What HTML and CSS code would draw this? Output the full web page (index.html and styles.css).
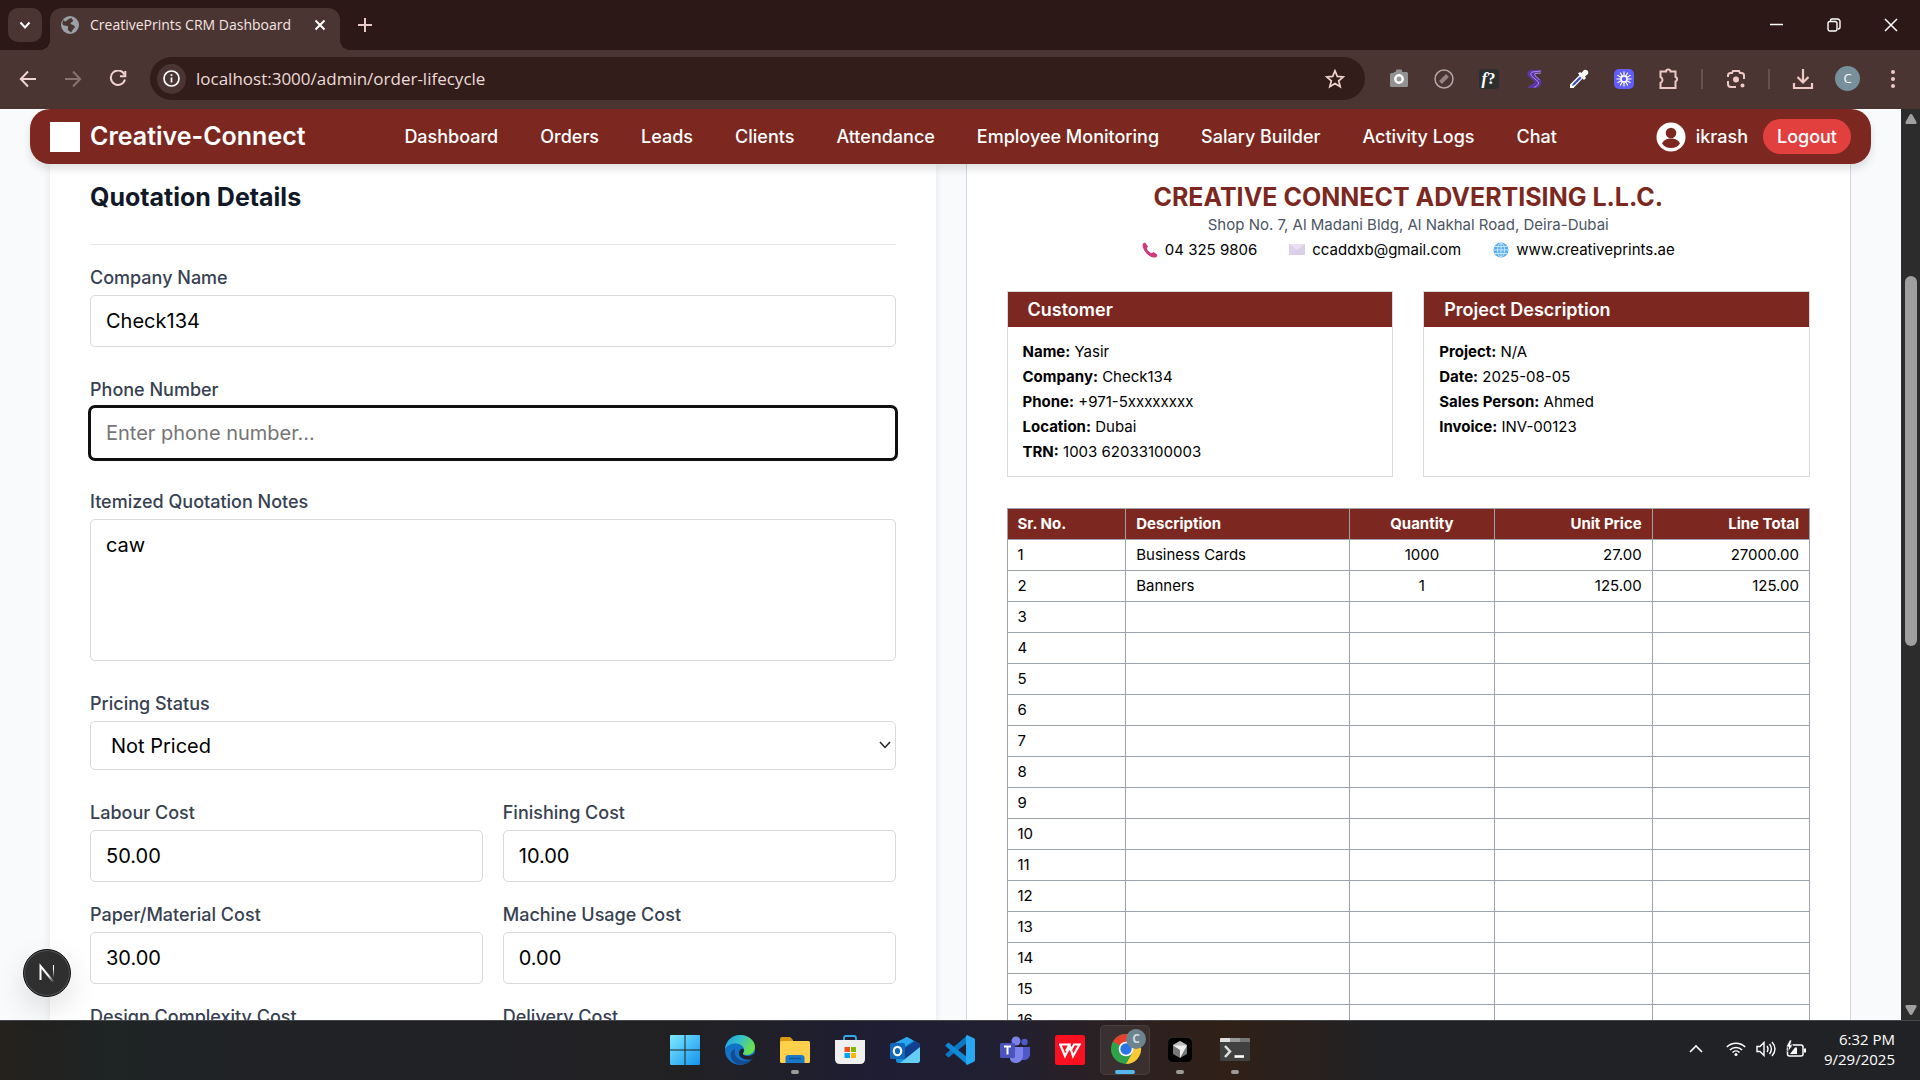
FILE: index.html
```html
<!DOCTYPE html>
<html lang="en">
<head>
<meta charset="utf-8">
<title>CreativePrints CRM Dashboard</title>
<link rel="stylesheet" href="styles.css">
</head>
<body>
<div class="tabstrip">
  <button class="tab-search" aria-label="Search tabs"><svg width="14" height="14" viewBox="0 0 14 14" fill="none" stroke="#fff" stroke-width="2"><path d="M2.500 4.500 7 9.500l4.500-5"/></svg></button>
  <div class="tab">
    <svg class="favicon" width="18" height="18" viewBox="0 0 18 18"><circle cx="9" cy="9" r="9" fill="#9aa0a6"/><path d="M3 3.500C1 6 1.200 8 2 9c1.500 1 4 .3 5 1.500.8 1-.8 2 0 3.500.5 1 2 1 2.200 2.500 2-.2 1.800-2.300 2.800-3.300 1.200-1 2.500-1.700 1.500-3.200C12.500 8.500 10 9 9.500 7.500 9.300 6 12 6.500 12 4.500c0-1-1.500-1.200-1.500-2.500-1.500-.5-2 1-3.500 1.500S5.500 6 4 5.500 3.500 4.500 3 3.500z" fill="#4a3533"/></svg>
    <span class="tab-title">CreativePrints CRM Dashboard</span>
    <button class="tab-close" aria-label="Close tab"><svg width="12" height="12" viewBox="0 0 12 12" fill="none" stroke="#fff" stroke-width="2"><path d="m1.500 1.500 9 9m0-9-9 9"/></svg></button>
  </div>
  <button class="new-tab" aria-label="New tab"><svg width="14" height="14" viewBox="0 0 14 14" fill="none" stroke="#e8c9c5" stroke-width="2"><path d="M7 0v14M0 7h14"/></svg></button>
  <div class="window-buttons">
    <button aria-label="Minimize"><svg width="14" height="14" viewBox="0 0 14 14" stroke="#fff" stroke-width="1.500"><path d="M0 6.500h13"/></svg></button>
    <button aria-label="Restore"><svg width="14" height="14" viewBox="0 0 14 14" fill="none" stroke="#fff" stroke-width="1.400"><rect x="1" y="3.500" width="9" height="9.500" rx="2"/><path d="M3.500 3V2.500A1.500 1.500 0 0 1 5 1h5.500A2.500 2.500 0 0 1 13 3.500V9a2 2 0 0 1-2 2"/></svg></button>
    <button aria-label="Close"><svg width="14" height="14" viewBox="0 0 14 14" stroke="#fff" stroke-width="1.500"><path d="m1 1 12 12M13 1 1 13"/></svg></button>
  </div>
</div>

<div class="toolbar">
  <button class="tool" aria-label="Back"><svg width="18" height="18" viewBox="0 0 18 18" fill="none" stroke="#f0d3cf" stroke-width="2"><path d="M17 9H2m7-7.500L1.800 9 9 16.500"/></svg></button>
  <button class="tool" aria-label="Forward"><svg width="18" height="18" viewBox="0 0 18 18" fill="none" stroke="#8a726f" stroke-width="2"><path d="M1 9h15M9 1.500 16.200 9 9 16.500"/></svg></button>
  <button class="tool" aria-label="Reload"><svg width="18" height="18" viewBox="0 0 18 18" fill="none" stroke="#f0d3cf" stroke-width="2"><path d="M15.500 4.500A7.200 7.200 0 1 0 16 9.500"/><path d="M16.300 1v5.200H11"/></svg></button>
  <div class="omnibox">
    <button class="site-info" aria-label="Site information"><svg width="17" height="17" viewBox="0 0 17 17" fill="none" stroke="#fff" stroke-width="1.700"><circle cx="8.500" cy="8.500" r="7.500"/><path d="M8.500 7.500v5M8.500 4.300V6"/></svg></button>
    <input class="url" aria-label="Address" value="localhost:3000/admin/order-lifecycle">
    <button class="star" aria-label="Bookmark"><svg width="20" height="20" viewBox="0 0 20 20" fill="none" stroke="#f0d3cf" stroke-width="1.700"><path d="m10 1.800 2.300 5.600 6 .5-4.600 3.900 1.500 5.900L10 14.500l-5.200 3.200 1.500-5.900L1.700 7.900l6-.5z"/></svg></button>
  </div>
  <button class="tool" aria-label="Camera extension"><svg width="20" height="20" viewBox="0 0 20 20"><path d="M2.500 4h2l.5-1h1.500l1-2.500h5L13.500 3h4A1.500 1.500 0 0 1 19 4.500v12a1.500 1.500 0 0 1-1.500 1.500h-15A1.500 1.500 0 0 1 1 16.500v-11A1.500 1.500 0 0 1 2.500 4z" fill="#929292"/><circle cx="10" cy="10" r="3.700" fill="#999" stroke="#fff" stroke-width="2.400"/></svg></button>
  <button class="tool" aria-label="Blocker extension"><svg width="20" height="20" viewBox="0 0 20 20" fill="none"><circle cx="10" cy="10" r="9" stroke="#b5a7a4" stroke-width="1.500"/><path d="m6.500 13.500 7-7" stroke="#948582" stroke-width="4"/></svg></button>
  <button class="tool" aria-label="Font extension"><span class="fontq-box"><i>f</i>?</span></button>
  <button class="tool" aria-label="Stylus extension"><svg width="20" height="20" viewBox="0 0 20 20"><path d="M18 1H6Q2 3 4 7l7 6-7 5v1h9q6-3 4-8l-6-5z" fill="#5a37a5"/><path d="M17 2 8 3Q5 5 8 7.500l6 5q2 3-4 6M17 4l-6 .5q-1 1 1 3l3.500 3.500" fill="none" stroke="#a98be6" stroke-width="1"/></svg></button>
  <button class="tool" aria-label="Color picker"><svg width="22" height="22" viewBox="0 0 22 22"><path d="M2 20v-3.500L11.500 7l-1.500-1.500L12 4l1.500 1L16 2a3 3 0 0 1 4 4l-3 2.500 1 1.500-2 2-1.500-1.500L5.500 20z" fill="#fff"/><path d="m4 18 1-2.500 7-7 1.500 1.500-7 7z" fill="#3548b5"/></svg></button>
  <button class="tool" aria-label="Loom"><svg width="20" height="20" viewBox="0 0 20 20"><rect width="20" height="20" rx="5" fill="#625df5"/><g stroke="#fff" stroke-width="1.200"><path d="M10 2.500v15M2.500 10h15M6.200 3.500l7.600 13M3.500 6.200l13 7.600M3.500 13.800l13-7.600M6.200 16.500l7.600-13"/></g><circle cx="10" cy="10" r="3" fill="#625df5" stroke="#fff" stroke-width="1.500"/></svg></button>
  <button class="tool" aria-label="Extensions"><svg width="22" height="22" viewBox="0 0 22 22" fill="none" stroke="#f0c9c4" stroke-width="2"><path d="M2.500 3.500H8a2 1.800 0 0 1 4.500 0h5V9a2 2.300 0 0 1 0 4.500V20h-15v-5a3 3.200 0 0 0 0-6z"/></svg></button>
  <span class="sep"></span>
  <button class="tool" aria-label="Search with Lens"><svg width="20" height="20" viewBox="0 0 20 20" fill="none" stroke="#f0c9c4" stroke-width="2"><path d="M2 8V6.500A2.500 2.500 0 0 1 4.500 4H6l1-2h6l1 2h1.500A2.500 2.500 0 0 1 18 6.500V10M2 12v3a3 3 0 0 0 3 3h5"/><circle cx="10" cy="10.500" r="3" fill="#f0c9c4" stroke="none"/><circle cx="16.500" cy="16.500" r="2" fill="#f0c9c4" stroke="none"/></svg></button>
  <span class="sep"></span>
  <button class="tool" aria-label="Downloads"><svg width="22" height="22" viewBox="0 0 22 22" fill="none" stroke="#f0c9c4" stroke-width="2.200"><path d="M11 1v13M5.500 9l5.500 5.500L16.500 9M2 15v5h18v-5"/></svg></button>
  <button class="tool" aria-label="Profile"><span class="avatar">C</span></button>
  <button class="tool" aria-label="Menu"><svg width="6" height="20" viewBox="0 0 6 20" fill="#f0c9c4"><circle cx="3" cy="3" r="2"/><circle cx="3" cy="10" r="2"/><circle cx="3" cy="17" r="2"/></svg></button>
</div>

<div class="viewport">
  <div class="page">
    <header class="navbar">
      <a class="brand" href="#"><span class="brand-logo"></span>Creative-Connect</a>
      <nav class="links">
        <a href="#">Dashboard</a><a href="#">Orders</a><a href="#">Leads</a><a href="#">Clients</a><a href="#">Attendance</a><a href="#">Employee Monitoring</a><a href="#">Salary Builder</a><a href="#">Activity Logs</a><a href="#">Chat</a>
      </nav>
      <div class="user">
        <a class="profile" href="#"><svg width="30" height="30" viewBox="0 0 30 30"><circle cx="15" cy="15" r="14.500" fill="#fff"/><circle cx="15" cy="11" r="5.300" fill="#7c2820"/><path d="M6 21.500c2-4 5.500-5 9-5s7 1 9 5c-2 3-5 4.500-9 4.500s-7-1.500-9-4.500z" fill="#7c2820"/></svg>ikrash</a>
        <button class="logout">Logout</button>
      </div>
    </header>
    <main class="columns">
      <form class="card form-card">
        <h2 class="card-title">Quotation Details</h2>
        <div class="field"><label for="company">Company Name</label><input id="company" value="Check134"></div>
        <div class="field"><label for="phone">Phone Number</label><input id="phone" class="focused" placeholder="Enter phone number..."></div>
        <div class="field"><label for="notes">Itemized Quotation Notes</label><textarea id="notes">caw</textarea></div>
        <div class="field"><label for="pricing">Pricing Status</label><div class="select"><select id="pricing"><option>Not Priced</option><option>Priced</option></select><svg width="12" height="8" viewBox="0 0 12 8" fill="none" stroke="#222" stroke-width="1.500"><path d="m1 1 5 5.500L11 1"/></svg></div></div>
        <div class="costs">
          <div class="field"><label for="labour">Labour Cost</label><input id="labour" value="50.00"></div>
          <div class="field"><label for="finishing">Finishing Cost</label><input id="finishing" value="10.00"></div>
          <div class="field"><label for="paper">Paper/Material Cost</label><input id="paper" value="30.00"></div>
          <div class="field"><label for="machine">Machine Usage Cost</label><input id="machine" value="0.00"></div>
          <div class="field"><label for="design">Design Complexity Cost</label><input id="design" value="0.00"></div>
          <div class="field"><label for="delivery">Delivery Cost</label><input id="delivery" value="0.00"></div>
        </div>
      </form>

      <section class="card quote">
        <h1 class="company">CREATIVE CONNECT ADVERTISING L.L.C.</h1>
        <p class="address">Shop No. 7, Al Madani Bldg, Al Nakhal Road, Deira-Dubai</p>
        <div class="contacts">
          <span class="contact"><svg width="16" height="16" viewBox="0 0 16 16"><path d="M1 1.500 3 .5l3 4-1.300 2c1 2 2.800 3.800 4.800 4.800l2-1.300 4 3-1 2c-3 1.500-7-.5-9.500-3S-.5 4.500 1 1.500z" fill="#d1397a"/></svg>04 325 9806</span>
          <span class="contact"><svg width="16" height="16" viewBox="0 0 16 16"><path d="M0 2h16v11H0z" fill="#dccfea"/><path d="m0 2 8 6 8-6" fill="#e9e1f3"/></svg>ccaddxb@gmail.com</span>
          <span class="contact"><svg width="16" height="16" viewBox="0 0 16 16"><circle cx="8" cy="8" r="7.500" fill="#5aaef0"/><g fill="none" stroke="#c4e6ff"><ellipse cx="8" cy="8" rx="3.500" ry="7"/><path d="M8 1v14M1 8h14M2 4.500h12M2 11.500h12"/></g></svg>www.creativeprints.ae</span>
        </div>
        <div class="boxes">
          <div class="box">
            <h3>Customer</h3>
            <div class="box-body">
              <p><b>Name:</b> Yasir</p><p><b>Company:</b> Check134</p><p><b>Phone:</b> +971-5xxxxxxxx</p><p><b>Location:</b> Dubai</p><p><b>TRN:</b> 1003 62033100003</p>
            </div>
          </div>
          <div class="box">
            <h3>Project Description</h3>
            <div class="box-body">
              <p><b>Project:</b> N/A</p><p><b>Date:</b> 2025-08-05</p><p><b>Sales Person:</b> Ahmed</p><p><b>Invoice:</b> INV-00123</p>
            </div>
          </div>
        </div>
        <table class="items">
          <colgroup><col class="c-no"><col class="c-desc"><col class="c-qty"><col class="c-price"><col class="c-total"></colgroup>
          <thead><tr><th>Sr. No.</th><th>Description</th><th>Quantity</th><th>Unit Price</th><th>Line Total</th></tr></thead>
          <tbody>
            <tr><td>1</td><td>Business Cards</td><td>1000</td><td>27.00</td><td>27000.00</td></tr>
            <tr><td>2</td><td>Banners</td><td>1</td><td>125.00</td><td>125.00</td></tr>
            <tr><td>3</td><td></td><td></td><td></td><td></td></tr>
            <tr><td>4</td><td></td><td></td><td></td><td></td></tr>
            <tr><td>5</td><td></td><td></td><td></td><td></td></tr>
            <tr><td>6</td><td></td><td></td><td></td><td></td></tr>
            <tr><td>7</td><td></td><td></td><td></td><td></td></tr>
            <tr><td>8</td><td></td><td></td><td></td><td></td></tr>
            <tr><td>9</td><td></td><td></td><td></td><td></td></tr>
            <tr><td>10</td><td></td><td></td><td></td><td></td></tr>
            <tr><td>11</td><td></td><td></td><td></td><td></td></tr>
            <tr><td>12</td><td></td><td></td><td></td><td></td></tr>
            <tr><td>13</td><td></td><td></td><td></td><td></td></tr>
            <tr><td>14</td><td></td><td></td><td></td><td></td></tr>
            <tr><td>15</td><td></td><td></td><td></td><td></td></tr>
            <tr><td>16</td><td></td><td></td><td></td><td></td></tr>
          </tbody>
        </table>
      </section>
    </main>
  </div>
  <div class="scrollbar">
    <svg width="12" height="10" viewBox="0 0 12 10" fill="#a0a0a0"><path d="M6 0q1 0 1.500 1l4 7q.5 2-1 2h-9q-1.500 0-1-2l4-7Q5 0 6 0z"/></svg>
    <span class="track-above"></span><span class="thumb"></span><span class="track-below"></span>
    <svg width="12" height="10" viewBox="0 0 12 10" fill="#a0a0a0"><path d="M6 10q1 0 1.500-1l4-7q.5-2-1-2h-9Q0 0 .5 2l4 7q.5 1 1.500 1z"/></svg>
  </div>
  <button class="dev-badge" aria-label="Open dev tools"><svg width="18" height="20" viewBox="0 0 18 20" fill="none" stroke-width="2"><defs><linearGradient id="nd" x1="2" y1="2" x2="16" y2="19" gradientUnits="userSpaceOnUse"><stop offset=".6" stop-color="#fff"/><stop offset="1" stop-color="#fff" stop-opacity="0"/></linearGradient><linearGradient id="nv" x1="0" y1="2" x2="0" y2="15" gradientUnits="userSpaceOnUse"><stop offset=".3" stop-color="#fff"/><stop offset="1" stop-color="#fff" stop-opacity="0"/></linearGradient></defs><path d="M2.500 17V3l13 16" stroke="url(#nd)"/><path d="M15 2h1v13h-1z" fill="url(#nv)"/></svg></button>
</div>

<footer class="taskbar">
  <div class="apps">
    <button class="app" aria-label="Start"><svg width="30" height="30" viewBox="0 0 30 30"><defs><linearGradient id="win" x2="1" y2="1"><stop stop-color="#7eeaff"/><stop offset="1" stop-color="#1292ee"/></linearGradient></defs><path d="M1 0h13.500v14.500H0V1q0-1 1-1zM15.500 0H29q1 0 1 1v13.500H15.500zM0 15.500h14.500V30H1q-1 0-1-1zM15.500 15.500H30V29q0 1-1 1H15.500z" fill="url(#win)"/></svg></button>
    <button class="app" aria-label="Edge"><svg width="30" height="30" viewBox="0 0 30 30"><defs><linearGradient id="eg" x2="1" y2=".4"><stop stop-color="#1b9de2"/><stop offset=".5" stop-color="#35c1c9"/><stop offset="1" stop-color="#6be04f"/></linearGradient></defs><circle cx="15" cy="15" r="15" fill="#1272c8"/><path d="M0 14C1 5 8 0 15 0c9 0 15 6 15 12 0 5-4 8-8 8-3 0-4.500-1-4-2 1-1 1.500-2 1-4-1-4-5-5.500-9-5.500-5 0-8 2.500-10 5.500z" fill="url(#eg)"/><path d="M10 14c-2 9 6 14 16 11-7 8-18 5-20-3-1-5 1-7 4-8z" fill="#154b93"/><path d="M18 18c-1 1.500 1 3 5 3 3 0 5.500-1.200 7-3.500 0 3-2 6-4 7-7 1-12-2-12-6.500 0-3 2-4.500 4-4.500 1.500 1.500 1 3 0 4.500z" fill="#211f31"/></svg></button>
    <button class="app running" aria-label="File Explorer"><svg width="30" height="30" viewBox="0 0 30 30"><path d="M0 4q0-2 2-2h8l3 3v5H0z" fill="#d99a12"/><rect y="6" width="30" height="22" rx="1.500" fill="#ffd04b"/><path d="M5.500 28v-5q0-3 3-3h13q3 0 3 3v5z" fill="#1978c8"/><path d="M9 23.500h12" stroke="#0d57a0" stroke-width="1.500"/></svg></button>
    <button class="app" aria-label="Microsoft Store"><svg width="30" height="30" viewBox="0 0 30 30"><path d="M9 6V3q0-2 2-2h8q2 0 2 2v3" fill="none" stroke="#35a9e8" stroke-width="1.800"/><path d="M0 5h30v19q0 5-5 5H5q-5 0-5-5z" fill="#f0f0f0"/><path d="M9.500 12H15v5H9.500z" fill="#f25022"/><path d="M16 12h5v5h-5z" fill="#7fba00"/><path d="M9.500 18H15v5H9.500z" fill="#00a4ef"/><path d="M16 18h5v5h-5z" fill="#ffb900"/></svg></button>
    <button class="app" aria-label="Outlook"><svg width="30" height="30" viewBox="0 0 30 30"><path d="m5 8 12-6 13 7v16q0 3-3 3H9q-3 0-3-3z" fill="#1490df"/><path d="m5 8 12-6 6 3.500L8 16z" fill="#2ba8ee"/><path d="m11 15 14-9 5 3v4L14 25z" fill="#123f8f"/><path d="m30 12-20 16h17q3 0 3-3z" fill="#66cdf5"/><rect y="8" width="15" height="16" rx="1.500" fill="#1169bd"/><ellipse cx="7.500" cy="16" rx="3.700" ry="4.200" fill="none" stroke="#fff" stroke-width="2.200"/></svg></button>
    <button class="app" aria-label="Visual Studio Code"><svg width="30" height="30" viewBox="0 0 30 30"><path d="M22 8 3.500 22.500.5 20v-1L22 .5z" fill="#0d77c2"/><path d="M22 22 3.500 7.500.5 10v1L22 29.500z" fill="#1089d8"/><path d="m22 0 7 3.200q1 .5 1 1.800v20q0 1.300-1 1.800L22 30l-1-1V1z" fill="#29a8f2"/></svg></button>
    <button class="app" aria-label="Teams"><svg width="30" height="30" viewBox="0 0 30 30"><circle cx="24.500" cy="7" r="3.200" fill="#5059c9"/><circle cx="16" cy="6" r="4.500" fill="#7b83eb"/><path d="M20 12h10v8q-1 5-6 5h-4z" fill="#5059c9"/><path d="M10 12h13v9q-1 7-7 7-5 0-6-4z" fill="#7b83eb"/><rect y="8" width="15" height="15" rx="1.500" fill="#4b53bc"/><path d="M4 11.500h7M7.500 11.500v8" stroke="#fff" stroke-width="2"/></svg></button>
    <button class="app" aria-label="WPS Office"><svg width="30" height="30" viewBox="0 0 30 30"><rect width="30" height="30" rx="2.500" fill="#fb1022"/><path d="M4 9.500h10.500L11 16M5.500 10l4.500 11 5-9.500 3 9.500 6.500-11.500H19l-3.500 6.500" fill="none" stroke="#fff" stroke-width="2.200"/></svg></button>
    <button class="app running active" aria-label="Chrome"><svg width="36" height="36" viewBox="0 0 36 36"><circle cx="16" cy="20" r="15" fill="#30a24a"/><path d="M3 12.500A15 15 0 0 1 29 12.500L16 20z" fill="#e8402f"/><path d="M29 12.500A15 15 0 0 1 16 35l6.500-11.200L16 12.500z" fill="#fcc934"/><circle cx="16" cy="20" r="7.300" fill="#fff"/><circle cx="16" cy="20" r="5.700" fill="#2b74e6"/></svg><span class="app-badge">C</span></button>
    <button class="app running" aria-label="Cursor"><svg width="24" height="24" viewBox="0 0 24 24"><rect width="24" height="24" rx="5" fill="#000"/><path d="m12 3 7 4v9l-7 4-7-4V7z" fill="#777"/><path d="m12 3 7 4-7 3-7-3z" fill="#bbb"/><path d="M5 7.500h14L12 20v-8z" fill="#eee"/></svg></button>
    <button class="app running" aria-label="Terminal"><svg width="30" height="24" viewBox="0 0 30 24"><rect width="30" height="23" rx="1.500" fill="#414141"/><path d="M1 0h9v4H0V1q0-1 1-1z" fill="#ddd"/><path d="M10 0h10v4H10z" fill="#999"/><path d="M20 0h9q1 0 1 1v3H20z" fill="#777"/><path d="m5 8 5 5.500L5 19" fill="none" stroke="#ddd" stroke-width="2.600"/><path d="M14.500 18.500h9.500" stroke="#fff" stroke-width="2.600"/></svg></button>
  </div>
  <div class="tray">
    <button class="tray-more" aria-label="Hidden icons"><svg width="14" height="9" viewBox="0 0 14 9" fill="none" stroke="#fff" stroke-width="1.600"><path d="m1 8 6-6 6 6"/></svg></button>
    <button class="tray-status" aria-label="Network, volume and battery">
      <svg width="20" height="16" viewBox="0 0 20 16" fill="none" stroke="#fff" stroke-width="1.500"><path d="M.8 6a13 13 0 0 1 18.400 0M3.800 9a8.800 8.800 0 0 1 12.400 0M6.500 11.500a5 5 0 0 1 7 0"/><circle cx="10" cy="13.500" r="1.500" fill="#fff" stroke="none"/></svg>
      <svg width="20" height="16" viewBox="0 0 20 16" fill="none" stroke="#fff" stroke-width="1.400"><path d="M1 5.500h3L8 1.500v13l-4-4H1zM11 5q2 3 0 6M13.500 3q3.800 5 0 10M16 1q6 7 0 14"/></svg>
      <svg width="20" height="18" viewBox="0 0 20 18"><rect x="1.500" y="5" width="15.500" height="11" rx="2" fill="none" stroke="#fff" stroke-width="1.500"/><path d="M18 8.500h2v4h-2zM4 14l5-6.500h2V14z" fill="#fff"/><path d="M3.500 0 0 7h2.500L2 12l5-7H4.500L6 0z" fill="#fff" stroke="#212226" stroke-width=".8"/></svg>
    </button>
    <div class="clock"><span>6:32 PM</span><span>9/29/2025</span></div>
  </div>
</footer>
</body>
</html>
```
FILE: styles.css
```css
* { box-sizing: border-box; }
body {
  margin: 0;
  height: 100vh;
  display: flex;
  flex-direction: column;
  overflow: hidden;
  font-family: Inter, sans-serif;
  background: #4a3533;
}
button { border: 0; background: none; padding: 0; font: inherit; color: inherit; display: flex; align-items: center; justify-content: center; }
svg { display: block; flex: none; }
a { color: inherit; text-decoration: none; }
h1, h2, h3, p { margin: 0; }

/* browser chrome */
.tabstrip { display: flex; height: 50px; padding: 8px 0 0 8px; background: #2c1917; color: #fff; font-family: "Open Sans", sans-serif; flex: none; }
.tab-search { width: 34px; height: 34px; border-radius: 10px; background: #4a3533; margin-right: 8px; }
.tab { position: relative; display: flex; align-items: center; width: 290px; padding: 0 12px 8px 11px; border-radius: 12px 12px 0 0; background: #4a3533; }
.tab::before, .tab::after { content: ""; position: absolute; bottom: 0; width: 10px; height: 10px; }
.tab::before { right: 100%; background: radial-gradient(circle at 0 0, transparent 10px, #4a3533 10px); }
.tab::after { left: 100%; background: radial-gradient(circle at 100% 0, transparent 10px, #4a3533 10px); }
.tab-title { flex: 1; margin-left: 11px; font-size: 14px; line-height: 20px; white-space: nowrap; color: #f6e4e1; }
.tab-close { width: 16px; height: 16px; }
.new-tab { width: 50px; height: 34px; }
.window-buttons { display: flex; margin-left: auto; padding-right: 1px; }
.window-buttons button { width: 57px; height: 34px; }
.toolbar { display: flex; align-items: center; height: 59px; padding: 0 5px 2px; flex: none; background: #4a3533; font-family: "Open Sans", sans-serif; }
.tool { width: 45px; height: 45px; flex: none; }
.omnibox { display: flex; align-items: center; flex: 1; height: 43px; margin: 0 11px 0 10px; padding: 0 20px 0 7px; border-radius: 22px; background: #321d1b; }
.site-info { width: 29px; height: 30px; border-radius: 50%; background: #4a3533; }
.url { flex: 1; margin-left: 10px; padding: 0; border: 0; outline: 0; background: none; color: #ecdbd8; font: 17px/24px "Open Sans", sans-serif; }
.sep { width: 2px; height: 20px; margin: 0 10px; background: #67504d; }
.avatar { width: 25px; height: 25px; border-radius: 50%; background: #78909c; color: #fff; font-size: 13px; line-height: 25px; text-align: center; }
.fontq-box { width: 20px; height: 20px; border-radius: 4px; background: #2b2f30; color: #fff; font: bold 17px/20px "Liberation Serif", serif; text-align: center; }

/* page */
.viewport { position: relative; display: flex; flex: 1; min-height: 0; background: #f9fafb; }
.page { flex: 1; min-width: 0; overflow: hidden; }
.navbar { position: relative; z-index: 1; display: flex; align-items: center; justify-content: space-between; height: 55px; margin: 0 30px; padding: 0 20px; border-radius: 20px; background: #7c2820; color: #fff; box-shadow: 0 5px 8px rgba(0, 0, 0, .12); }
.brand { display: flex; align-items: center; gap: 10px; font-size: 25px; line-height: 35px; font-weight: 600; }
.brand-logo { width: 30px; height: 30px; background: #fff; }
.links { display: flex; gap: 42px; font-size: 18px; line-height: 25px; font-weight: 500; white-space: nowrap; }
.user { display: flex; align-items: center; gap: 15px; font-size: 18px; line-height: 25px; font-weight: 500; }
.profile { display: flex; align-items: center; gap: 10px; }
.logout { height: 35px; padding: 0 14px; border-radius: 18px; background: #e23f3f; }

.columns { display: grid; grid-template-columns: 1fr 1fr; gap: 30px; padding: 0 50px; }
.card { background: #fff; padding: 16px 40px 40px; }
.form-card { box-shadow: 0 0 8px rgba(0, 0, 0, .08); }
.card-title { padding-bottom: 29px; margin-bottom: 20px; border-bottom: 1px solid #e5e7eb; font-size: 25px; line-height: 35px; font-weight: 700; color: #111827; }
.field { display: flex; flex-direction: column; gap: 5px; margin-bottom: 30px; }
.field label { font-size: 18px; line-height: 25px; font-weight: 500; color: #374151; }
.field input, .field textarea, .field select { display: block; width: 100%; height: 52px; margin: 0; padding: 0 15px; border: 1px solid #d8dadd; border-radius: 5px; background: #fff; color: #000; font: 20px/30px Inter, sans-serif; outline: 0; }
.field textarea { height: 142px; padding-top: 10px; resize: none; }
.field select { height: 49px; padding: 0 20px; appearance: none; }
.select { position: relative; }
.select svg { position: absolute; right: 5px; top: 20px; }
.field input::placeholder { color: #757575; }
.field .focused { border-color: #767676; outline: 3px solid #101010; outline-offset: -1px; }
.costs { display: grid; grid-template-columns: 1fr 1fr; gap: 20px; }
.costs .field { margin: 0; }

.quote { border: solid #d5d8de; border-width: 0 1px; text-align: center; font-size: 15px; line-height: 25px; color: #000; }
.company { font-size: 25px; line-height: 35px; font-weight: 700; color: #7c2820; }
.address { line-height: 20px; color: #4b5563; }
.contacts { display: flex; justify-content: center; gap: 32px; margin-top: 5px; }
.contact { display: flex; align-items: center; gap: 7px; line-height: 20px; }
.boxes { display: grid; grid-template-columns: 1fr 1fr; gap: 30px; margin-top: 31px; text-align: left; }
.box { border: 1px solid #d8dadd; }
.box h3 { padding: 5px 20px; background: #7c2820; color: #fff; font-size: 18px; line-height: 25px; font-weight: 600; }
.box-body { padding: 12px 15px; }
.items { width: 100%; margin-top: 31px; border-collapse: collapse; table-layout: fixed; line-height: 20px; text-align: left; }
.items th, .items td { height: 31px; padding: 5px 10px; border: 1px solid #9ca3af; font-size: 15px; }
.items th { background: #7c2820; color: #fff; font-weight: 700; }
.items th:nth-child(3), .items td:nth-child(3) { text-align: center; }
.items th:nth-child(n+4), .items td:nth-child(n+4) { text-align: right; }
.c-no { width: 14.8%; }
.c-desc { width: 27.9%; }
.c-qty { width: 18%; }
.c-price { width: 19.7%; }
.c-total { width: 19.6%; }

.scrollbar { display: flex; flex-direction: column; align-items: center; width: 19px; padding: 5px 0 5px; background: #2c2c2c; }
.track-above { flex: 152; }
.thumb { flex: 369; width: 12px; border-radius: 6px; background: #9f9f9f; }
.track-below { flex: 359; }
.dev-badge { position: absolute; z-index: 2; left: 23px; bottom: 23px; width: 48px; height: 48px; border: 1px solid #111; border-radius: 50%; background: #2f2f2f; box-shadow: inset 0 0 0 1px #565656, 0 12px 30px rgba(0, 0, 0, .12); }

/* taskbar */
.taskbar { display: grid; grid-template-columns: 1fr auto 1fr; align-items: center; height: 60px; padding-bottom: 2px; flex: none; border-top: 1px solid #46474a; color: #fff; background: linear-gradient(90deg, #24211d, #1f2425 6%, #212225 14%, #212124 36%, #1e1d33 46%, #211f31 52%, #2c2122 58%, #302017 64%, #212226 72%); }
.apps { grid-column: 2; display: flex; gap: 5px; }
.app { position: relative; width: 50px; height: 50px; border-radius: 5px; }
.active { background: rgba(255, 255, 255, .07); border: 1px solid rgba(255, 255, 255, .07); }
.active > svg { margin: -5px 0 0 5px; }
.running::after { content: ""; position: absolute; left: 50%; bottom: 1px; width: 8px; height: 4px; margin-left: -4px; border-radius: 2px; background: #9d9a98; }
.active::after { width: 20px; margin-left: -10px; background: #55b8ed; bottom: 0; }
.app-badge { position: absolute; right: 3px; top: 3px; width: 20px; height: 20px; border-radius: 50%; background: #6d838e; color: #d0dade; font: bold 12px/20px "Open Sans", sans-serif; text-align: center; }
.tray { display: flex; align-items: center; justify-content: flex-end; padding: 0 25px 2px 0; font: 15px/20px "Open Sans", sans-serif; }
.tray-status { gap: 10px; margin: 0 18px 0 23px; }
.clock { display: flex; flex-direction: column; text-align: right; }
```
